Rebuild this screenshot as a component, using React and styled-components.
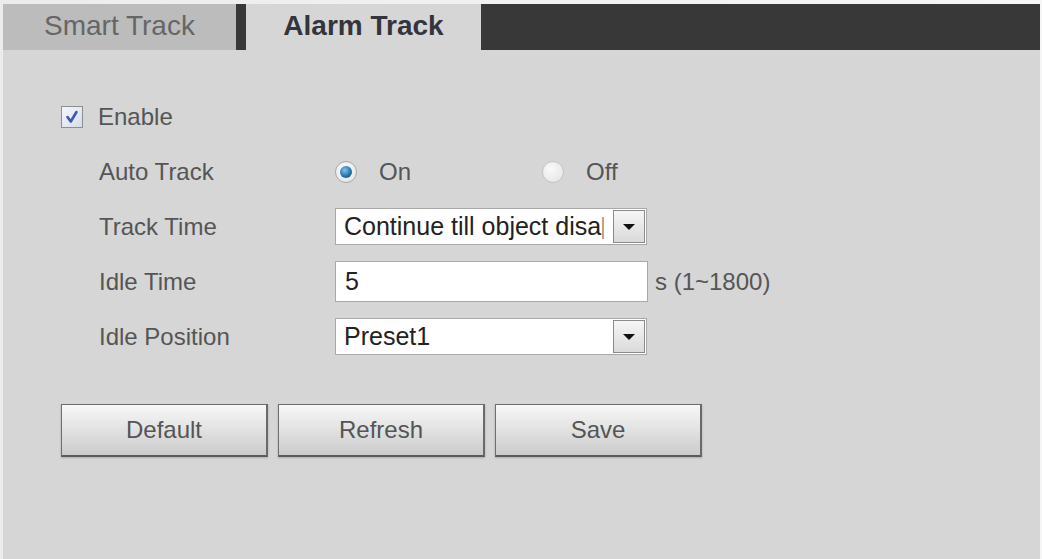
import styled, { createGlobalStyle } from 'styled-components'

const LABEL = '#555555'
const PANEL = '#d6d6d6'
const FONT = '"Liberation Sans", Arial, sans-serif'

const Global = createGlobalStyle`
	html, body {
		margin: 0;
		padding: 0;
		background: #f2f2f2;
	}
	* {
		box-sizing: border-box;
	}
`

const Page = styled.div`
	width: 1042px;
	height: 559px;
	padding: 4px 2px 0 3px;
	display: flex;
	flex-direction: column;
	font-family: ${FONT};
	background: linear-gradient(to right, #ececec, #f6f6f6);
`

const TabBar = styled.div`
	display: flex;
	height: 46px;
	background: #383838;
	flex: 0 0 auto;
`

const Tab = styled.div`
	width: ${(p) => (p.$active ? '235px' : '233px')};
	margin-left: ${(p) => (p.$active ? '10px' : '0')};
	display: flex;
	align-items: center;
	justify-content: center;
	font-size: 28px;
	font-weight: ${(p) => (p.$active ? 700 : 400)};
	color: ${(p) => (p.$active ? '#34343c' : '#666')};
	background: ${(p) => (p.$active ? PANEL : '#bcbcbc')};
	padding-bottom: 2px;
`

const Panel = styled.div`
	flex: 1;
	background: ${PANEL};
	padding: 39px 0 0 58px;
`

const Row = styled.div`
	display: flex;
	align-items: center;
	height: 55px;
	padding-left: ${(p) => (p.$indent ? '38px' : '0')};
`

const Label = styled.div`
	width: 236px;
	font-size: 24px;
	color: ${LABEL};
`

const CheckLabel = styled.label`
	display: flex;
	align-items: center;
	gap: 15px;
	font-size: 24px;
	color: ${LABEL};
`

const CheckBox = styled.span`
	width: 22px;
	height: 22px;
	border: 1px solid #8e8e8e;
	background: linear-gradient(to bottom right, #f4f6fb, #d5dcec);
	display: flex;
	align-items: center;
	justify-content: center;
`

const RadioOption = styled.label`
	width: ${(p) => (p.$wide ? '207px' : 'auto')};
	display: flex;
	align-items: center;
	gap: 22px;
	font-size: 24px;
	color: ${LABEL};
`

const RadioDot = styled.span`
	width: 22px;
	height: 22px;
	border-radius: 50%;
	border: 1px solid ${(p) => (p.$on ? '#a8a8a8' : '#c4c4c4')};
	background: radial-gradient(circle at 40% 35%, #fafafa, #e2e2e2);
	display: flex;
	align-items: center;
	justify-content: center;

	&::after {
		content: '';
		display: ${(p) => (p.$on ? 'block' : 'none')};
		width: 12px;
		height: 12px;
		border-radius: 50%;
		background: radial-gradient(circle at 40% 35%, #7cc4ee, #1d6fa8 60%, #0c4a78);
	}
`

const Select = styled.div`
	width: 312px;
	height: 37px;
	border: 1px solid #a9a9a9;
	background: #fff;
	display: flex;
	align-items: center;
	padding: 0 1px 0 8px;
`

const SelectText = styled.span`
	flex: 1;
	white-space: nowrap;
	font-size: 25px;
	color: #222;
`

const Caret = styled.span`
	display: inline-block;
	width: 2px;
	height: 22px;
	margin-left: 1px;
	vertical-align: middle;
	background: #c8a27c;
`

const DropButton = styled.span`
	width: 32px;
	height: 33px;
	flex: 0 0 auto;
	border: 1px solid #8a8a8a;
	background: linear-gradient(to bottom, #f6f6f6, #dadada);
	display: flex;
	align-items: center;
	justify-content: center;

	&::after {
		content: '';
		border-left: 6px solid transparent;
		border-right: 6px solid transparent;
		border-top: 6px solid #111;
	}
`

const Input = styled.div`
	width: 313px;
	height: 41px;
	border: 1px solid #a9a9a9;
	background: #fff;
	display: flex;
	align-items: center;
	padding-left: 9px;
	font-size: 25px;
	color: #222;
`

const Unit = styled.span`
	margin-left: 7px;
	font-size: 24px;
	color: ${LABEL};
`

const Buttons = styled.div`
	display: flex;
	gap: 10px;
	margin-top: 40px;
`

const Button = styled.button`
	width: 207px;
	height: 53px;
	font-family: ${FONT};
	font-size: 24px;
	color: ${LABEL};
	border: 1px solid #6e6e6e;
	border-bottom: 2px solid #5a5a5a;
	border-right: 2px solid #6a6a6a;
	background: linear-gradient(to bottom, #f7f7f7, #e4e4e4 45%, #cbcbcb);
	box-shadow: 0 1px 2px rgba(0, 0, 0, 0.2);
`

export default function App() {
	return (
		<Page>
			<Global />
			<TabBar>
				<Tab>Smart Track</Tab>
				<Tab $active>Alarm Track</Tab>
			</TabBar>
			<Panel>
				<Row>
					<CheckLabel>
						<CheckBox>
							<svg width="16" height="16" viewBox="0 0 16 16">
								<path
									d="M3.5 8 L6.8 12.5 L12.5 3"
									fill="none"
									stroke="#3b55b8"
									strokeWidth="2.6"
									strokeLinecap="round"
									strokeLinejoin="round"
								/>
							</svg>
						</CheckBox>
						Enable
					</CheckLabel>
				</Row>
				<Row $indent>
					<Label>Auto Track</Label>
					<RadioOption $wide>
						<RadioDot $on />
						On
					</RadioOption>
					<RadioOption>
						<RadioDot />
						Off
					</RadioOption>
				</Row>
				<Row $indent>
					<Label>Track Time</Label>
					<Select>
						<SelectText>
							Continue till object disa
							<Caret />
						</SelectText>
						<DropButton />
					</Select>
				</Row>
				<Row $indent>
					<Label>Idle Time</Label>
					<Input>5</Input>
					<Unit>s (1~1800)</Unit>
				</Row>
				<Row $indent>
					<Label>Idle Position</Label>
					<Select>
						<SelectText>Preset1</SelectText>
						<DropButton />
					</Select>
				</Row>
				<Buttons>
					<Button>Default</Button>
					<Button>Refresh</Button>
					<Button>Save</Button>
				</Buttons>
			</Panel>
		</Page>
	)
}
